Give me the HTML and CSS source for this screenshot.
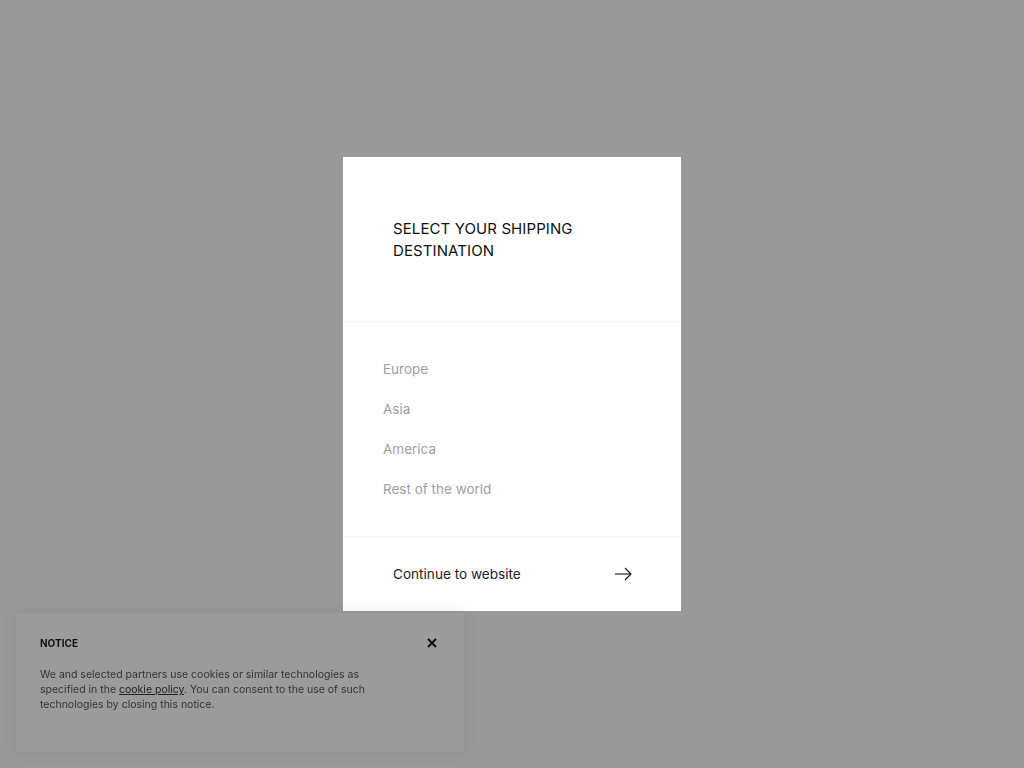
FILE: index.html
```html
<!DOCTYPE html>
<html lang="en">
<head>
<meta charset="utf-8">
<title>Select your shipping destination</title>
<link rel="stylesheet" href="styles.css">
</head>
<body>
<div class="overlay">
  <div class="modal">
    <div class="modal-head">
      <h2 class="modal-title">SELECT YOUR SHIPPING DESTINATION</h2>
    </div>
    <ul class="regions">
      <li class="region">Europe</li>
      <li class="region">Asia</li>
      <li class="region">America</li>
      <li class="region">Rest of the world</li>
    </ul>
    <div class="modal-foot">
      <span class="continue">Continue to website</span>
      <svg class="arrow" width="17" height="14" viewBox="0 0 17 14" fill="none" stroke="#111" stroke-width="1.1">
        <path d="M0 7H16"/>
        <path d="M10 1L16 7L10 13"/>
      </svg>
    </div>
  </div>
</div>
<div class="notice">
  <div class="notice-head">
    <span class="notice-title">NOTICE</span>
    <svg class="close" width="10" height="10" viewBox="0 0 10 10" stroke="#0c0c1a" stroke-width="2">
      <path d="M1 1L9 9M9 1L1 9"/>
    </svg>
  </div>
  <p class="notice-text">We and selected partners use cookies or similar technologies as specified in the <span class="notice-link">cookie policy</span>. You can consent to the use of such technologies by closing this notice.</p>
</div>
</body>
</html>
```
FILE: styles.css
```css
html, body {
  margin: 0;
  padding: 0;
  height: 100%;
}
body {
  background: #999999;
  font-family: Inter, "Liberation Sans", sans-serif;
  overflow: hidden;
}
.overlay {
  height: 100vh;
  display: flex;
  align-items: center;
  justify-content: center;
}
.modal {
  width: 338px;
  height: 454px;
  background: #ffffff;
  display: flex;
  flex-direction: column;
}
.modal-head {
  padding: 61px 50px 59px;
  border-bottom: 1px solid #f2f2f2;
}
.modal-title {
  margin: 0;
  font-size: 15px;
  font-weight: 400;
  line-height: 22px;
  letter-spacing: 0.1px;
  color: #111;
  max-width: 200px;
}
.regions {
  list-style: none;
  margin: 0;
  padding: 27px 40px 27px;
  border-bottom: 1px solid #f2f2f2;
}
.region {
  font-size: 13.5px;
  line-height: 40px;
  color: #a29c9e;
}
.modal-foot {
  flex: 1;
  padding: 0 49px 0 50px;
  display: flex;
  align-items: center;
  justify-content: space-between;
}
.continue {
  font-size: 13.6px;
  color: #222;
  padding-top: 0;
}
.arrow {
  display: block;
}
.notice {
  position: fixed;
  left: 16px;
  bottom: 16px;
  width: 400px;
  height: 91px;
  padding: 24px;
  background: #9b9b9b;
  box-shadow: 0 0 16px rgba(0,0,0,0.08);
}
.notice-head {
  display: flex;
  justify-content: space-between;
  align-items: center;
  padding-right: 3px;
}
.notice-title {
  font-size: 10px;
  font-weight: 700;
  color: #111;
}
.close {
  display: block;
}
.notice-text {
  margin: 18px 0 0;
  max-width: 330px;
  font-size: 10.5px;
  line-height: 15px;
  color: #333;
}
.notice-link {
  text-decoration: underline;
  color: #222;
}
```
